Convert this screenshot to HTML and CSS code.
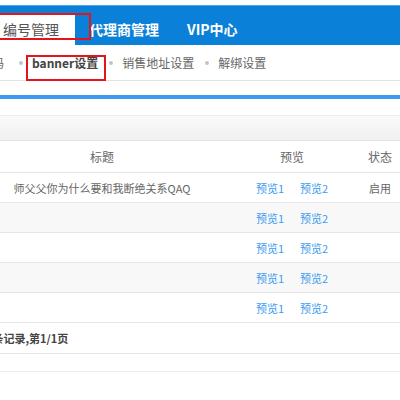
FILE: index.html
```html
<!DOCTYPE html>
<html lang="zh-CN">
<head>
    <meta charset="UTF-8">
    <title>banner设置</title>
    <link rel="stylesheet" href="styles.css">
</head>
<body>
    <div class="topbar">
        <ul class="tabs">
            <li class="tab active">编号管理</li>
            <li class="tab">代理商管理</li>
            <li class="tab">VIP中心</li>
        </ul>
    </div>

    <div class="subnav">
        <a class="sub first">编码</a>
        <a class="sub active"><i class="dot"></i>banner设置</a>
        <a class="sub"><i class="dot"></i>销售地址设置</a>
        <a class="sub"><i class="dot"></i>解绑设置</a>
    </div>

    <div class="spacer"></div>
    <div class="blue-line"></div>
    <div class="spacer big"></div>
    <div class="toolbar"></div>

    <table class="list">
        <colgroup>
            <col style="width:244px">
            <col style="width:136px">
            <col style="width:40px">
        </colgroup>
        <thead>
            <tr><th>标题</th><th>预览</th><th>状态</th></tr>
        </thead>
        <tbody>
            <tr><td>师父父你为什么要和我断绝关系QAQ</td><td class="links"><a>预览1</a><a>预览2</a></td><td>启用</td></tr>
            <tr><td></td><td class="links"><a>预览1</a><a>预览2</a></td><td></td></tr>
            <tr><td></td><td class="links"><a>预览1</a><a>预览2</a></td><td></td></tr>
            <tr><td></td><td class="links"><a>预览1</a><a>预览2</a></td><td></td></tr>
            <tr><td></td><td class="links"><a>预览1</a><a>预览2</a></td><td></td></tr>
        </tbody>
    </table>

    <div class="pager"><span>共1条记录,第1/1页</span></div>
    <div class="pager-bottom"></div>
</body>
</html>
```

FILE: styles.css
```css
body {
    margin: 0;
    padding-top: 5px;
    background: #fff;
    font-family: "Noto Sans CJK SC", "Noto Sans", sans-serif;
    color: #666;
    overflow: hidden;
}

/* top blue bar */
.topbar {
    height: 40px;
    background-color: #0a80d8;
    box-shadow: inset 0 1px 0 #4aa6ea;
}
.tabs {
    list-style: none;
    margin: 0 0 0 -13px;
    padding: 0;
    height: 100%;
    display: flex;
    align-items: flex-end;
}
.tab {
    height: 32px;
    line-height: 33px;
    padding: 0 14px;
    font-size: 14px;
    font-weight: bold;
    color: #fff;
    white-space: nowrap;
}
.tab.active {
    position: relative;
    padding: 0 16px;
    background-color: #fff;
    color: #555;
    font-weight: normal;
}
.tab.active::after {
    content: "";
    position: absolute;
    left: 11px;
    top: 0;
    right: -16px;
    bottom: 5px;
    border: 2px solid #e3141c;
    z-index: 2;
}

/* second level nav */
.subnav {
    height: 35px;
    border-bottom: 1px solid #e2e2e2;
    display: flex;
    align-items: center;
    gap: 11px;
    margin-left: -20px;
}
.sub {
    display: flex;
    align-items: center;
    line-height: 35px;
    font-size: 12px;
    color: #666;
    white-space: nowrap;
}
.sub.first {
    margin-right: 4px;
}
.sub .dot {
    width: 4px;
    height: 4px;
    border-radius: 50%;
    background-color: #c4c4c4;
    margin-right: 9px;
}
.sub.active {
    position: relative;
    font-weight: bold;
    color: #444;
}
.sub.active::after {
    content: "";
    position: absolute;
    left: 7px;
    right: -8px;
    top: 10px;
    bottom: -1px;
    border: 2px solid #e3141c;
}

.spacer {
    height: 14px;
}
.spacer.big {
    height: 16px;
}
.blue-line {
    height: 4px;
    background-color: #3d9af4;
}
.toolbar {
    height: 24px;
    border-top: 1px solid #ececec;
    border-bottom: 1px solid #e4e4e4;
    background: linear-gradient(#fafafa, #f0f0f0);
}

/* list table */
.list {
    margin-left: -20px;
    width: 420px;
    border-collapse: collapse;
    table-layout: fixed;
    font-size: 11px;
}
.list th {
    height: 31px;
    padding: 0;
    font-weight: normal;
    font-size: 12px;
    color: #666;
    border-bottom: 1px solid #e6e6e6;
}
.list td {
    height: 29px;
    padding: 0;
    text-align: center;
    color: #666;
    border-bottom: 1px solid #e6e6e6;
    white-space: nowrap;
}
.list tbody tr:nth-child(even) td {
    background-color: #f8f8f8;
}
.list .links a {
    color: #3a9cee;
    margin: 0 8px;
}

/* paging */
.pager {
    height: 30px;
    line-height: 30px;
    border-bottom: 1px solid #e6e6e6;
    font-size: 11px;
    font-weight: bold;
    color: #444;
    white-space: nowrap;
}
.pager span {
    margin-left: -25px;
}
.pager-bottom {
    height: 17px;
    border-bottom: 1px solid #ececec;
}
```
